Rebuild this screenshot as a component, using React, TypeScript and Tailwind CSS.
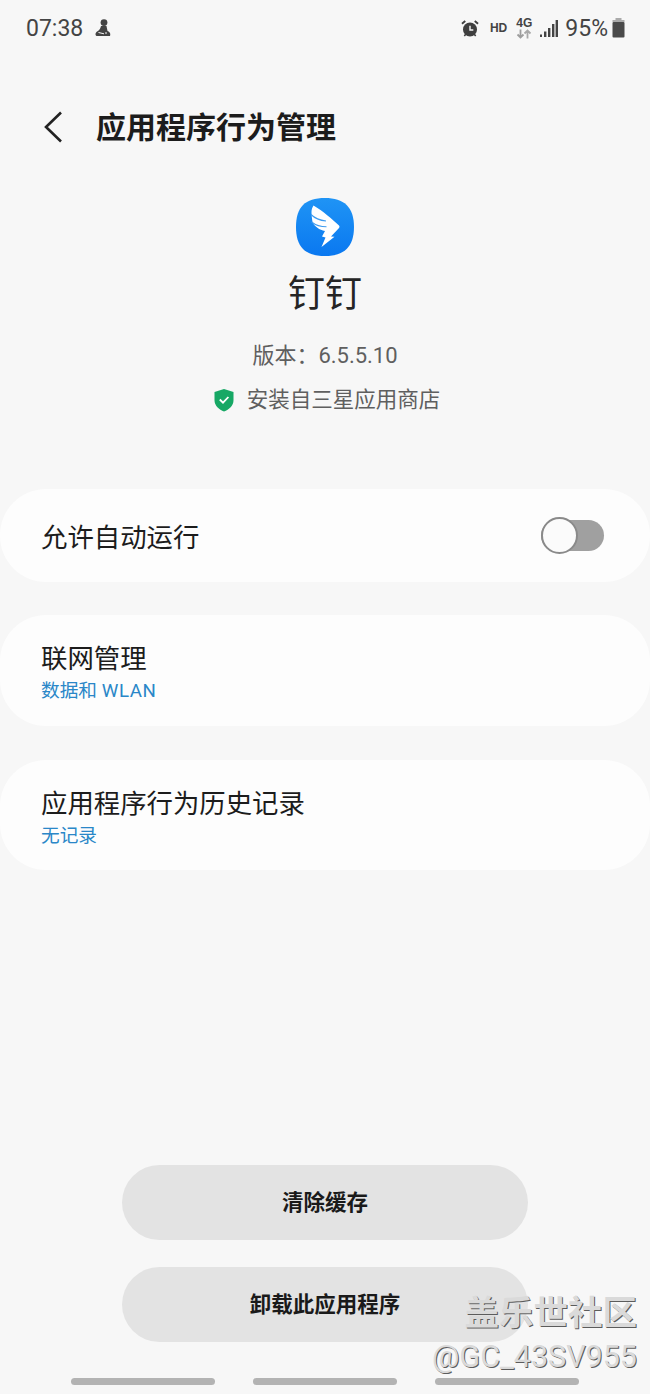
import React from "react";

const AppLogo = () => (
  <svg width="58" height="58" viewBox="0 0 58 58">
    <defs>
      <linearGradient id="logoBg" x1="0" y1="0" x2="0" y2="1">
        <stop offset="0" stopColor="#1f94f5" />
        <stop offset="1" stopColor="#0a78f0" />
      </linearGradient>
    </defs>
    <path d="M29 0C48 0 58 9 58 29C58 49 48 58 29 58C9 58 0 49 0 29C0 9 9 0 29 0Z" fill="url(#logoBg)" />
    <path
      d="M17.5 7.5C27 13 36 21 43 27.5C43.8 28.4 43.6 29.4 42.8 30.3L35 38.5L38.5 38.8L25.5 49L29.5 39.5L26 38.5L29 33C23.5 32 18.5 28.5 16.5 24C16 21 15.5 17 15.5 14C15.5 11.5 16.3 9.5 17.5 7.5Z"
      fill="#ffffff"
    />
    <path d="M15 16.5C19 20.5 25 22.5 30 23M15.5 24C20 27.5 25 28.8 30.5 28.8" stroke="#3f9cf0" strokeWidth="1.1" fill="none" />
  </svg>
);

const StatusIcons = () => (
  <div className="flex items-center text-[#444]">
    <svg width="18" height="19" viewBox="0 0 19 19" className="mr-[11px]">
      <circle cx="9.5" cy="10.5" r="7.4" fill="#3f3f3f" />
      <path d="M1 4.5L4.5 1.5M18 4.5L14.5 1.5" stroke="#3f3f3f" strokeWidth="2" />
      <path d="M3.5 17.5L5 15.5M15.5 17.5L14 15.5" stroke="#3f3f3f" strokeWidth="1.6" />
      <path d="M9.5 6.5V11H13" stroke="#f7f7f7" strokeWidth="1.5" fill="none" />
    </svg>
    <span className="mr-[9px] text-[12px] font-bold leading-none [font-family:'Liberation_Sans',sans-serif]">HD</span>
    <div className="mr-[8px] flex w-[16px] flex-col items-center">
      <span className="text-[12px] font-bold leading-[12px] [font-family:'Liberation_Sans',sans-serif]">4G</span>
      <svg width="16" height="10" viewBox="0 0 16 9">
        <path d="M4.5 0V8M1.5 5L4.5 8L7.5 5" stroke="#9d9d9d" strokeWidth="1.8" fill="none" />
        <path d="M11.5 9V1M8.5 4L11.5 1L14.5 4" stroke="#a8a8a8" strokeWidth="1.8" fill="none" />
      </svg>
    </div>
    <svg width="18" height="19" viewBox="0 0 18 19" className="mr-[7px]">
      <rect x="0" y="15.5" width="2" height="2.5" fill="#444" />
      <rect x="4" y="12.5" width="2.4" height="5.5" fill="#444" />
      <rect x="8" y="9" width="2.4" height="9" fill="#444" />
      <rect x="12" y="5" width="2.4" height="13" fill="#444" />
      <rect x="15.6" y="1" width="2.4" height="17" fill="#444" />
    </svg>
    <span className="mr-[4px] text-[23px] leading-none">95%</span>
    <svg width="13" height="20" viewBox="0 0 13 20">
      <rect x="3.5" y="0" width="6" height="3" fill="#aaa" />
      <rect x="0.5" y="2" width="12" height="2" fill="#aaa" />
      <rect x="0.5" y="4" width="12" height="15.5" rx="1" fill="#4a4a4a" />
    </svg>
  </div>
);

const NavPill = () => <div className="h-[7px] w-[144px] rounded-full bg-[#b3b3b3]" />;

export default function App() {
  return (
    <div className="relative flex h-[1394px] w-[650px] flex-col overflow-hidden bg-[#f7f7f7] [font-family:Roboto,'Noto_Sans_CJK_SC',sans-serif]">
      <div className="flex h-[56px] items-center justify-between pl-[26px] pr-[25px] text-[#444]">
        <div className="flex items-center">
          <span className="text-[23px] leading-none">07:38</span>
          <svg width="16" height="18" viewBox="0 0 16 18" className="ml-[12px]">
            <circle cx="9" cy="3.6" r="3.4" fill="#444" />
            <path d="M6 7H11.5L12.5 12C14.5 12.5 16 14.5 15 17H1.5C0 16 0 13.5 3 12C4.5 11 5.5 9 6 7Z" fill="#444" />
            <path d="M3.5 13.5L9 14.8M11 13V15" stroke="#f7f7f7" strokeWidth="1" />
          </svg>
        </div>
        <StatusIcons />
      </div>

      <div className="mt-[47px] flex h-[48px] items-center pl-[44px]">
        <svg width="20" height="32" viewBox="0 0 20 32" fill="none">
          <path d="M17 1.5L2 16L17 30.5" stroke="#222" strokeWidth="2.6" />
        </svg>
        <h1 className="ml-[32px] pt-[1px] text-[30px] font-semibold leading-none text-[#1c1c1c]">应用程序行为管理</h1>
      </div>

      <div className="mt-[47px] flex flex-col items-center">
        <AppLogo />
        <div className="mt-[16px] text-[37px] leading-[46px] text-[#252525]">钉钉</div>
        <div className="mt-[22px] text-[22px] leading-[32px] text-[#5f5f5f]">版本：6.5.5.10</div>
        <div className="mt-[12px] flex items-center pl-[4px]">
          <svg width="20" height="24" viewBox="0 0 20 24">
            <path d="M10 1L19.5 4V12C19.5 18 15 21.5 10 23.5C5 21.5 0.5 18 0.5 12V4Z" fill="#17a865" />
            <path d="M5.8 11.5L9 14.7L14.4 9" stroke="#fff" strokeWidth="1.8" fill="none" />
          </svg>
          <span className="ml-[13px] text-[21.5px] leading-[32px] text-[#5f5f5f]">安装自三星应用商店</span>
        </div>
      </div>

      <div className="mt-[73px] flex flex-col gap-[33px]">
        <div className="flex h-[93px] items-center justify-between rounded-[46px] bg-[#fdfdfd] pl-[41px] pr-[46px]">
          <span className="pt-[5px] text-[26.4px] leading-none text-[#1c1c1c]">允许自动运行</span>
          <div className="flex h-[31px] w-[63px] items-center rounded-full bg-[#a0a0a0]">
            <div className="h-[37px] w-[37px] rounded-full border-2 border-[#8a8a8a] bg-[#fbfbfb]" />
          </div>
        </div>
        <div className="mb-[1px] flex h-[111px] flex-col justify-center rounded-[46px] bg-[#fdfdfd] pl-[41px] pt-[4px]">
          <span className="text-[26.4px] leading-[36px] text-[#1c1c1c]">联网管理</span>
          <span className="pt-[1px] text-[18.7px] leading-[26px] text-[#2a87c8]">
            数据和 <span className="tracking-[0.6px]">WLAN</span>
          </span>
        </div>
        <div className="flex h-[110px] flex-col justify-center rounded-[46px] bg-[#fdfdfd] pl-[41px] pt-[4px]">
          <span className="text-[26.4px] leading-[36px] text-[#1c1c1c]">应用程序行为历史记录</span>
          <span className="pt-[1px] text-[18.7px] leading-[26px] text-[#2a87c8]">无记录</span>
        </div>
      </div>

      <div className="mt-auto flex flex-col items-center gap-[27px]">
        <button className="h-[75px] w-[406px] rounded-full bg-[#e3e3e3] pt-[2px] text-[21.5px] font-bold text-[#1a1a1a]">清除缓存</button>
        <button className="h-[75px] w-[406px] rounded-full bg-[#e3e3e3] pt-[2px] text-[21.5px] font-bold text-[#1a1a1a]">卸载此应用程序</button>
      </div>

      <div className="mb-[9px] mt-[36px] flex justify-center gap-[38px]">
        <NavPill />
        <NavPill />
        <NavPill />
      </div>

      <div className="absolute bottom-[15px] right-[13px] flex flex-col items-end text-[#dadada] [text-shadow:1px_1px_0_#5c5c5c]">
        <span className="text-[34.5px] font-bold leading-[44px]">盖乐世社区</span>
        <span className="text-[30.5px] leading-[44px]">@GC_43SV955</span>
      </div>
    </div>
  );
}
